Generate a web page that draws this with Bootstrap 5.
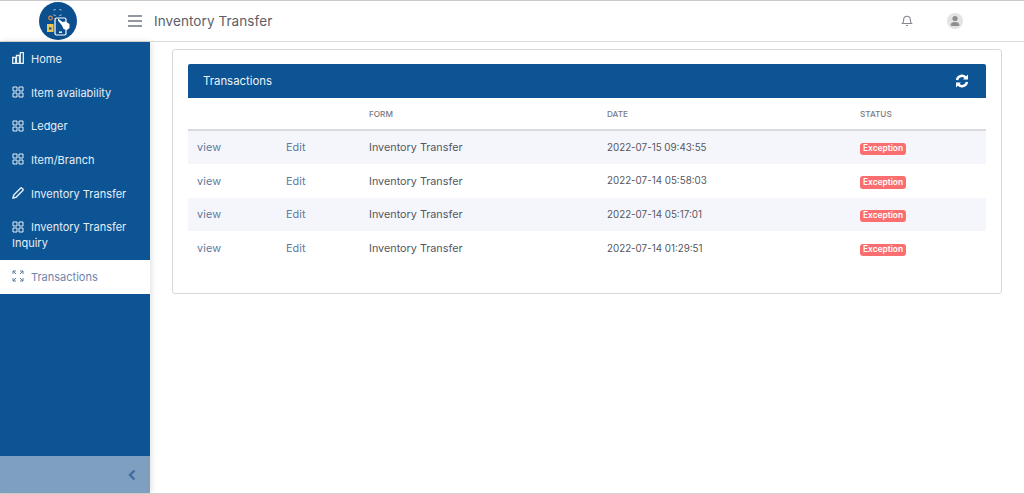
<!DOCTYPE html>
<html lang="en">
<head>
<meta charset="utf-8">
<title>Inventory Transfer</title>
<link rel="stylesheet" href="https://cdn.jsdelivr.net/npm/bootstrap@5.3.0/dist/css/bootstrap.min.css">
<style>
html,body{height:100%;overflow:hidden}
body{font-family:Inter,"Open Sans","Liberation Sans",sans-serif;background:#fff;color:#4b4b5a;font-size:11px}
.shell{height:494px;border-top:1px solid #c9c9c9;border-bottom:1px solid #d4d4d4}
.topbar{height:41px;border-bottom:1px solid #dcdcdc}
.brand-slot{width:150px}
.burger{width:14px;height:12px;border-top:2px solid #9298a0;border-bottom:2px solid #9298a0;position:relative;margin-left:-22px}
.burger::after{content:"";position:absolute;left:0;right:0;top:3px;border-top:2px solid #9298a0}
.page-title{font-size:13.5px;color:#5c6068;margin-left:12px;letter-spacing:.08px}
.top-icons{gap:34px;padding-right:61px}
.body-row{height:451px}
.side{width:150px;background:#0c5494;box-shadow:1px 0 6px rgba(0,0,0,.14);z-index:1}
.side-link{display:block;padding:8.85px 12px;color:#e6eef6;font-size:11px;line-height:16px;text-decoration:none}
.side-link svg{width:12px;height:12px;margin-right:7px;vertical-align:-1.5px}
.side-link.here{background:#fff;color:#6f86ad}
.side-foot{height:37px;background:#7e9fc0;color:#3e6f9f;padding-right:14px}
.main-area{padding:7px 22px 0}
.panel{height:245px;border:1px solid #d6d8dc;border-radius:3px;padding:14px 15px 15px}
.panel-head{height:34px;background:#0c5494;color:#eef3f8;border-radius:2px 2px 0 0;padding:2px 17px 0 15px;font-size:11.4px}
.tx{font-size:10.8px;table-layout:fixed;width:798px;margin:0}
.tx th{font-size:8.2px;color:#77797f;font-weight:500;height:32px;padding:2px 9px 0;vertical-align:middle;border-bottom:2px solid #d7d9de;background:#fff}
.tx td{height:33.8px;padding:2px 9px 0;vertical-align:middle;border:0;color:#55575f;background:transparent}
.tx tr.odd td{background:#f5f6fb}
.tx a{color:#5d789f;text-decoration:none;letter-spacing:.12px}
.tx td.stamp{font-size:9.8px}
.tag{background:#fb6e70;color:#fff;font-size:8.4px;font-weight:600;padding:1.5px 3px;border-radius:3px;display:inline-block;line-height:9.5px}
</style>
</head>
<body>
<div class="shell d-flex flex-column">
  <header class="topbar d-flex align-items-center flex-shrink-0">
    <div class="brand-slot d-flex justify-content-center">
      <svg width="38" height="38" viewBox="0 0 38 38" style="margin-left:-34px" aria-label="logo">
        <circle cx="19" cy="19" r="19" fill="#0c4f8e"/>
        <rect x="16" y="16" width="11" height="17" rx="1.500" fill="none" stroke="#fff" stroke-width="1.200"/>
        <rect x="20" y="29.500" width="3" height="1.400" fill="#fff"/>
        <path d="M19 16.500l4.500 3.500 3-.5 4 2.500v4l-2.500 2-3.500-1-1.500-3.500-4-5z" fill="#fff"/>
        <rect x="8" y="22" width="6.500" height="8" fill="#e8c65a"/>
        <rect x="10" y="25.500" width="2.500" height="2" fill="#0c4f8e"/>
        <circle cx="11.500" cy="16" r="1.800" fill="none" stroke="#e08a4a" stroke-width="1.200"/>
        <path d="M15 9V7.500h2M20 7.500h2V9M15 12v1.500h2M20 13.500h2V12" fill="none" stroke="#8fb0d0" stroke-width=".8"/>
      </svg>
    </div>
    <div class="burger"></div>
    <div class="page-title">Inventory Transfer</div>
    <div class="ms-auto d-flex align-items-center top-icons">
      <svg width="12" height="13" viewBox="0 0 12 13" fill="none" stroke="#85888f" stroke-width="1.100" style="margin-top:-2px"><path d="M1.500 9.500c1-1 1.200-2 1.200-4a3.300 3.300 0 0 1 6.600 0c0 2 .2 3 1.200 4z"/><path d="M5 11.500h2"/></svg>
      <svg width="16" height="16" viewBox="0 0 16 16"><circle cx="8" cy="8" r="8" fill="#e3e3e3"/><circle cx="8" cy="5.500" r="2.600" fill="#8e8e8e"/><path d="M3.500 12.500c0-2.500 2-3.500 4.500-3.500s4.500 1 4.500 3.500c-1 .8-8 .8-9 0z" fill="#8e8e8e"/></svg>
    </div>
  </header>
  <div class="body-row d-flex">
    <nav class="side d-flex flex-column flex-shrink-0">
      <a class="side-link" href="#"><svg viewBox="0 0 12 12" fill="none" stroke="currentColor"><path d="M.7 5.500h3v5.800h-3zM4.500 3.500h3v7.800h-3zM8.300.7h3v10.600h-3z" stroke-width="1.300"/></svg>Home</a>
      <a class="side-link" href="#"><svg viewBox="0 0 12 12" fill="none" stroke="currentColor"><path d="M1 1h4v4H1zM7 1h4v4H7zM1 7h4v4H1zM7 7h4v4H7z"/></svg>Item availability</a>
      <a class="side-link" href="#"><svg viewBox="0 0 12 12" fill="none" stroke="currentColor"><path d="M1 1h4v4H1zM7 1h4v4H7zM1 7h4v4H1zM7 7h4v4H7z"/></svg>Ledger</a>
      <a class="side-link" href="#"><svg viewBox="0 0 12 12" fill="none" stroke="currentColor"><path d="M1 1h4v4H1zM7 1h4v4H7zM1 7h4v4H1zM7 7h4v4H7z"/></svg>Item/Branch</a>
      <a class="side-link" href="#"><svg viewBox="0 0 12 12" fill="none" stroke="currentColor" stroke-width="1.400"><path d="M1 11l.7-3L8.500 1.200a1 1 0 0 1 1.400 0l.9.9a1 1 0 0 1 0 1.400L4 10.300z"/></svg>Inventory Transfer</a>
      <a class="side-link" href="#"><svg viewBox="0 0 12 12" fill="none" stroke="currentColor"><path d="M1 1h4v4H1zM7 1h4v4H7zM1 7h4v4H1zM7 7h4v4H7z"/></svg>Inventory Transfer Inquiry</a>
      <a class="side-link here" href="#"><svg viewBox="0 0 12 12" fill="none" stroke="#4f6f96"><path d="M1 4V1h3M1 1l3 3M11 4V1H8M11 1L8 4M1 8v3h3M1 11l3-3M11 8v3H8M11 11L8 8" stroke-width=".9"/></svg>Transactions</a>
      <div class="side-foot mt-auto d-flex align-items-center justify-content-end">
        <svg width="8" height="12" viewBox="0 0 8 12" fill="none" stroke="currentColor" stroke-width="2.400"><path d="M6.500 1.500L2 6l4.500 4.500"/></svg>
      </div>
    </nav>
    <main class="main-area flex-grow-1">
      <section class="panel">
        <div class="panel-head d-flex align-items-center justify-content-between">
          <span>Transactions</span>
          <svg width="14" height="14" viewBox="0 0 14 14" fill="none" stroke="#fff" stroke-width="2.500" style="margin-top:-3px"><path d="M2 6a5 5 0 0 1 9-2M12 8a5 5 0 0 1-9 2"/><path d="M13 .5v5H8zM1 13.500v-5h5z" fill="#fff" stroke="none"/></svg>
        </div>
        <table class="table tx">
          <colgroup><col style="width:89px"><col style="width:83px"><col style="width:238px"><col style="width:253px"><col></colgroup>
          <thead><tr><th></th><th></th><th>FORM</th><th>DATE</th><th>STATUS</th></tr></thead>
          <tbody>
            <tr class="odd"><td><a href="#">view</a></td><td><a href="#">Edit</a></td><td>Inventory Transfer</td><td class="stamp">2022-07-15 09:43:55</td><td><span class="tag">Exception</span></td></tr>
            <tr><td><a href="#">view</a></td><td><a href="#">Edit</a></td><td>Inventory Transfer</td><td class="stamp">2022-07-14 05:58:03</td><td><span class="tag">Exception</span></td></tr>
            <tr class="odd"><td><a href="#">view</a></td><td><a href="#">Edit</a></td><td>Inventory Transfer</td><td class="stamp">2022-07-14 05:17:01</td><td><span class="tag">Exception</span></td></tr>
            <tr><td><a href="#">view</a></td><td><a href="#">Edit</a></td><td>Inventory Transfer</td><td class="stamp">2022-07-14 01:29:51</td><td><span class="tag">Exception</span></td></tr>
          </tbody>
        </table>
      </section>
    </main>
  </div>
</div>
<script src="https://cdn.jsdelivr.net/npm/bootstrap@5.3.0/dist/js/bootstrap.bundle.min.js"></script>
</body>
</html>
